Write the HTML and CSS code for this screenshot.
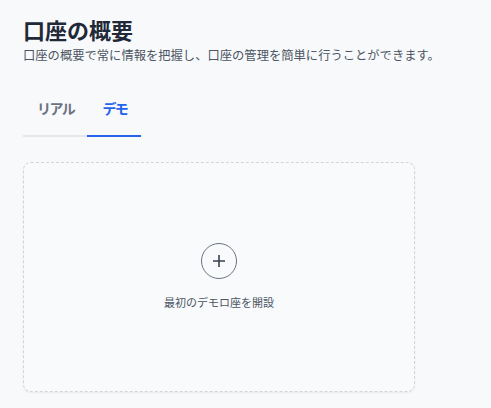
FILE: index.html
```html
<!DOCTYPE html>
<html lang="ja">
<head>
    <meta charset="UTF-8">
    <meta name="viewport" content="width=device-width, initial-scale=1.0">
    <title>口座の概要</title>
    <link rel="stylesheet" href="styles.css">
</head>
<body>
    <div class="page">
        <h1>口座の概要</h1>
        <p class="subtitle">口座の概要で常に情報を把握し、口座の管理を簡単に行うことができます。</p>

        <div class="tabs">
            <div class="tab">リアル</div>
            <div class="tab active">デモ</div>
        </div>

        <div class="empty-card">
            <div class="add-circle">
                <svg width="14" height="14" viewBox="0 0 14 14">
                    <path d="M7 1v12M1 7h12" stroke="#374151" stroke-width="1.6" fill="none"/>
                </svg>
            </div>
            <div class="empty-text">最初のデモロ座を開設</div>
        </div>
    </div>
</body>
</html>
```

FILE: styles.css
```css
body {
    margin: 0;
    background-color: #f8f9fb;
    font-family: "Noto Sans CJK JP", "Noto Sans", sans-serif;
    color: #1f2937;
}

.page {
    padding: 14px 23px 10px;
}

h1 {
    margin: 0;
    font-size: 22px;
    line-height: 30px;
    font-weight: 700;
    color: #1f2937;
}

.subtitle {
    margin: 3px 0 0;
    font-size: 12.3px;
    line-height: 16px;
    color: #4b5563;
}

.tabs {
    display: flex;
    margin-top: 35px;
}

.tab {
    padding: 0 13px 17px 14px;
    font-size: 14px;
    line-height: 20px;
    font-weight: 600;
    letter-spacing: -1.5px;
    color: #6b7280;
    border-bottom: 2px solid #e5e7eb;
}

.tab.active {
    color: #2563eb;
    border-bottom-color: #2563eb;
    padding: 0 14px 17px 15px;
}

.empty-card {
    margin-top: 25px;
    width: 390px;
    height: 228px;
    border: 1px dashed #d1d5db;
    border-radius: 8px;
    background-color: #f9fafb;
    box-shadow: 0 1px 2px rgba(0,0,0,0.06);
    display: flex;
    flex-direction: column;
    align-items: center;
    justify-content: center;
}

.add-circle {
    width: 34px;
    height: 34px;
    border: 1px solid #6b7280;
    border-radius: 50%;
    display: flex;
    align-items: center;
    justify-content: center;
    margin-top: -2px;
}

.empty-text {
    margin-top: 16px;
    font-size: 11px;
    line-height: 14px;
    color: #4b5563;
}
```
